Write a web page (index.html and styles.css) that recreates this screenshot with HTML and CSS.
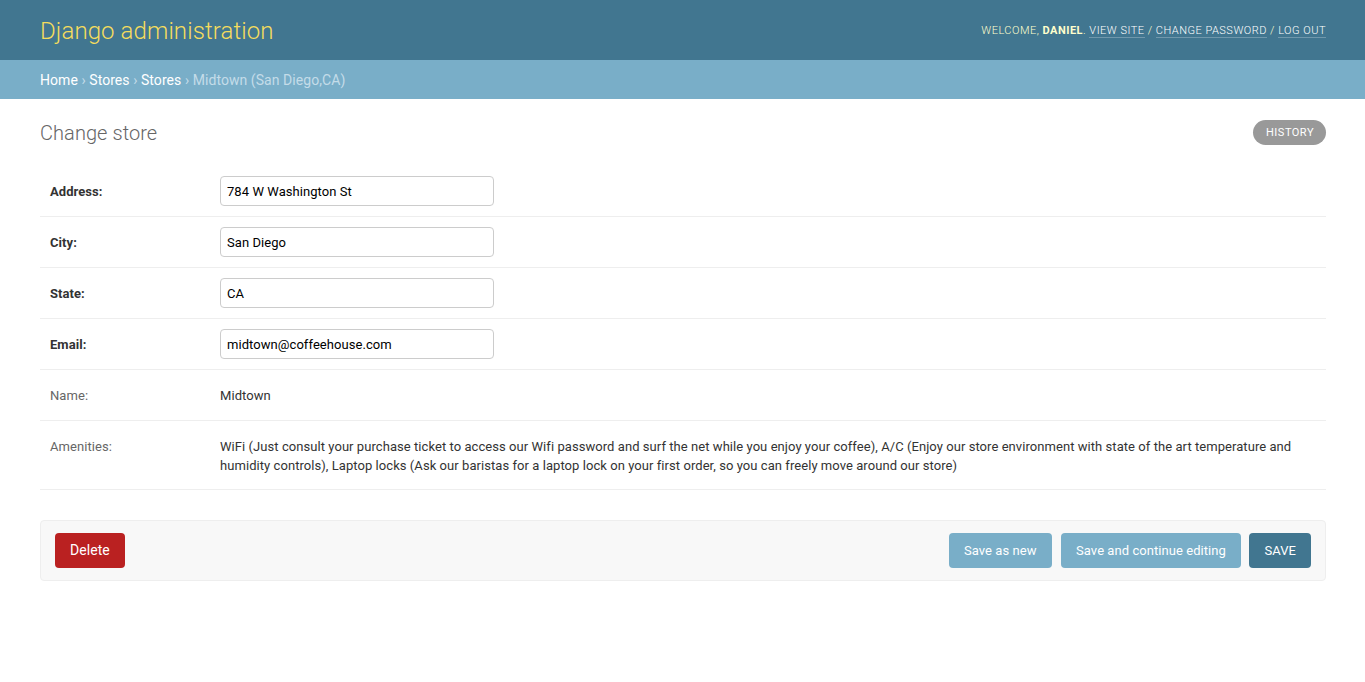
FILE: index.html
```html
<!DOCTYPE html>
<html lang="en">
<head>
<meta charset="utf-8">
<title>Change store | Django site admin</title>
<link rel="stylesheet" href="styles.css">
</head>
<body>
<div class="header">
  <div class="branding"><h1 class="site-name">Django administration</h1></div>
  <div class="user-tools">
    Welcome, <strong>Daniel</strong>.
    <a href="#">View site</a> /
    <a href="#">Change password</a> /
    <a href="#">Log out</a>
  </div>
</div>
<div class="breadcrumbs">
  <a href="#">Home</a> › <a href="#">Stores</a> › <a href="#">Stores</a> › Midtown (San Diego,CA)
</div>
<div class="content">
  <div class="title-row">
    <h1 class="page-title">Change store</h1>
    <ul class="object-tools"><li><a href="#" class="history">History</a></li></ul>
  </div>
  <form class="store-form">
    <fieldset class="module aligned">
      <div class="form-row">
        <label class="required">Address:</label>
        <input class="vTextField" type="text" value="784 W Washington St">
      </div>
      <div class="form-row">
        <label class="required">City:</label>
        <input class="vTextField" type="text" value="San Diego">
      </div>
      <div class="form-row">
        <label class="required">State:</label>
        <input class="vTextField" type="text" value="CA">
      </div>
      <div class="form-row">
        <label class="required">Email:</label>
        <input class="vTextField" type="text" value="midtown@coffeehouse.com">
      </div>
      <div class="form-row">
        <label>Name:</label>
        <div class="readonly">Midtown</div>
      </div>
      <div class="form-row">
        <label>Amenities:</label>
        <div class="readonly">WiFi (Just consult your purchase ticket to access our Wifi password and surf the net while you enjoy your coffee), A/C (Enjoy our store environment with state of the art temperature and humidity controls), Laptop locks (Ask our baristas for a laptop lock on your first order, so you can freely move around our store)</div>
      </div>
    </fieldset>
    <div class="submit-row">
      <a href="#" class="deletelink">Delete</a>
      <div class="save-buttons">
        <button type="button" class="btn btn-saveasnew">Save as new</button>
        <button type="button" class="btn btn-continue">Save and continue editing</button>
        <button type="button" class="btn btn-default">Save</button>
      </div>
    </div>
  </form>
</div>
</body>
</html>
```

FILE: styles.css
```css
* { box-sizing: border-box; }
html, body { margin: 0; padding: 0; }
body {
  font-family: Roboto, "Lucida Grande", Verdana, Arial, sans-serif;
  font-size: 14px;
  color: #333;
  background: #fff;
  letter-spacing: 0.06px;
}
a { text-decoration: none; }

.header {
  height: 60px;
  padding: 2px 39px 0 40px;
  background: #417690;
  color: #ffc;
  display: flex;
  justify-content: space-between;
  align-items: center;
}
.site-name {
  margin: 0;
  font-size: 24px;
  font-weight: 300;
  color: #f5dd5d;
  line-height: 30px;
  letter-spacing: 0.1px;
}
.user-tools {
  font-size: 11px;
  font-weight: 300;
  letter-spacing: 0.5px;
  text-transform: uppercase;
  color: #ffc;
  line-height: 14px;
}
.user-tools strong { font-weight: bold; }
.user-tools a {
  color: #fff;
  border-bottom: 1px solid rgba(255,255,255,0.25);
}

.breadcrumbs {
  height: 39px;
  padding: 0 40px;
  background: #79aec8;
  color: #c4dce8;
  font-size: 14px;
  line-height: 40px;
}
.breadcrumbs a { color: #fff; }

.content { padding: 20px 39px 20px 40px; }
.title-row {
  display: flex;
  justify-content: space-between;
  align-items: flex-start;
}
.page-title {
  margin: 0 0 19px;
  font-size: 20px;
  font-weight: 300;
  color: #666;
  line-height: 28px;
}
.object-tools {
  list-style: none;
  margin: 1px 0 0;
  padding: 0;
}
.history {
  display: block;
  height: 25px;
  line-height: 25px;
  padding: 0 12px 0 13px;
  background: #999;
  color: #fff;
  font-size: 11px;
  font-weight: 400;
  letter-spacing: 0.5px;
  text-transform: uppercase;
  border-radius: 15px;
}

.store-form { margin: 0; }
.module {
  margin: 0 0 30px;
  padding: 0;
  border: none;
  min-width: 0;
}
.form-row {
  display: flex;
  align-items: flex-start;
  padding: 10px;
  border-bottom: 1px solid #eee;
  font-size: 13px;
  min-height: 51px;
}
.form-row label {
  flex: 0 0 170px;
  padding: 7px 10px 0 0;
  line-height: 18px;
  color: #666;
}
.form-row label.required {
  color: #333;
  font-weight: bold;
}
.vTextField {
  width: 274px;
  height: 30px;
  margin: 0;
  padding: 5px 6px;
  border: 1px solid #ccc;
  border-radius: 4px;
  font-family: Roboto, Arial, sans-serif;
  font-size: 13px;
  letter-spacing: 0.06px;
  color: #000;
  background: #fff;
}
.readonly {
  flex: 1;
  padding: 6px 0 4px;
  line-height: 19px;
  color: #333;
}

.submit-row {
  display: flex;
  justify-content: space-between;
  align-items: center;
  padding: 12px 14px;
  background: #f8f8f8;
  border: 1px solid #eee;
  border-radius: 4px;
  margin: 0 0 20px;
}
.deletelink {
  display: block;
  height: 35px;
  line-height: 35px;
  padding: 0 15px;
  background: #ba2121;
  color: #fff;
  border-radius: 4px;
  font-size: 14px;
}
.save-buttons {
  display: flex;
  gap: 8px;
}
.btn {
  height: 35px;
  padding: 0 15px;
  border: none;
  border-radius: 4px;
  background: #79aec8;
  color: #fff;
  font-family: Roboto, Arial, sans-serif;
  font-size: 13px;
  letter-spacing: 0.06px;
  line-height: 15px;
}
.btn-saveasnew { margin-right: 1px; }
.btn-continue { padding: 0 15.5px; }
.btn-default {
  background: #417690;
  text-transform: uppercase;
}
```
